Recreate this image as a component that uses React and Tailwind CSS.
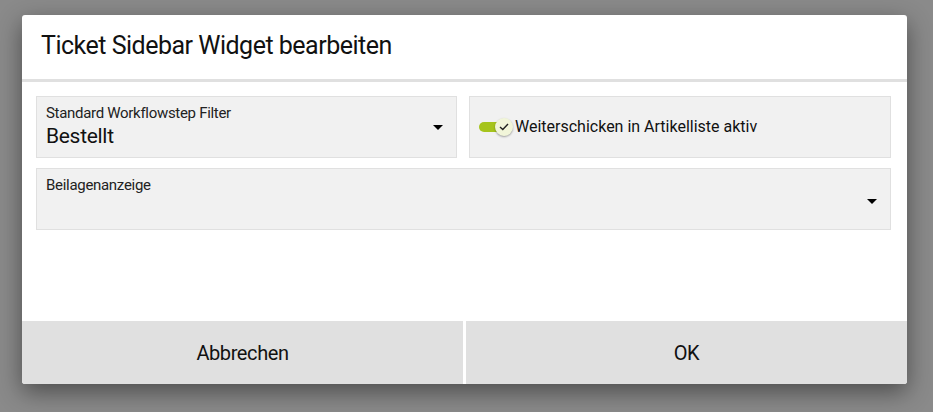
import React from 'react';

const Caret = () => (
  <svg width="10" height="6" viewBox="0 0 10 6" className="shrink-0">
    <path d="M0 0 L10 0 L5 5 Z" fill="#000" />
  </svg>
);

const SelectField = ({ label, value, className = '' }) => (
  <div className={`flex h-[62px] items-center border border-[#e0e0e0] bg-[#f1f1f1] pl-[9px] pr-[13px] ${className}`}>
    <div className="flex min-w-0 flex-1 flex-col self-stretch pt-[8px]">
      <span className="text-[15px] leading-[17px] tracking-[-0.3px] text-[#222]">{label}</span>
      <span className="pt-[1px] text-[21px] leading-[27px] tracking-[-0.3px] text-[#111]">{value}</span>
    </div>
    <div className="pt-[2px]">
      <Caret />
    </div>
  </div>
);

const Toggle = () => (
  <div className="relative h-[20px] w-[36px] shrink-0">
    <div className="absolute left-[0px] top-[5px] h-[10px] w-[28px] rounded-full bg-[#a6c41c]" />
    <div className="absolute left-[16px] top-[1px] flex h-[18px] w-[18px] items-center justify-center rounded-full bg-[#f1f5d9] shadow-[0_1px_2px_rgba(0,0,0,0.35)]">
      <svg width="10" height="8" viewBox="0 0 10 8">
        <path d="M1 4 L3.8 6.6 L9 1" stroke="#222" strokeWidth="1.4" fill="none" />
      </svg>
    </div>
  </div>
);

export default function App() {
  return (
    <div
      className="min-h-[412px] w-full bg-[#8a8a8a] pt-[15px]"
      style={{ fontFamily: 'Roboto, "Liberation Sans", sans-serif' }}
    >
      <div className="ml-[22px] flex h-[369px] w-[885px] flex-col overflow-hidden rounded-[3px] bg-white shadow-[0_8px_24px_rgba(0,0,0,0.45)]">
        <div className="flex h-[67px] shrink-0 items-center border-b-[3px] border-[#e0e0e0] pl-[19px] pb-[2px]">
          <h1 className="text-[25px] tracking-[-0.5px] text-[#111]">Ticket Sidebar Widget bearbeiten</h1>
        </div>
        <div className="flex flex-1 flex-col gap-[10px] pl-[14px] pr-[16px] pt-[14px]">
          <div className="flex gap-[12px]">
            <SelectField label="Standard Workflowstep Filter" value="Bestellt" className="w-[421px]" />
            <div className="flex h-[62px] flex-1 items-center gap-[1px] border border-[#e0e0e0] bg-[#f1f1f1] pl-[9px]">
              <Toggle />
              <span className="-ml-[1px] text-[16px] text-[#111]">Weiterschicken in Artikelliste aktiv</span>
            </div>
          </div>
          <div className="flex h-[62px] border border-[#e0e0e0] bg-[#f1f1f1] pl-[9px] pr-[13px]">
            <div className="flex-1 pt-[8px] text-[15px] leading-[17px] tracking-[-0.3px] text-[#222]">Beilagenanzeige</div>
            <div className="flex items-center pt-[6px]">
              <Caret />
            </div>
          </div>
        </div>
        <div className="flex h-[63px] shrink-0 gap-[3px]">
          <button className="flex-1 bg-[#e0e0e0] text-[20px] tracking-[-0.4px] text-[#111]">Abbrechen</button>
          <button className="flex-1 bg-[#e0e0e0] text-[20px] tracking-[-0.4px] text-[#111]">OK</button>
        </div>
      </div>
    </div>
  );
}
